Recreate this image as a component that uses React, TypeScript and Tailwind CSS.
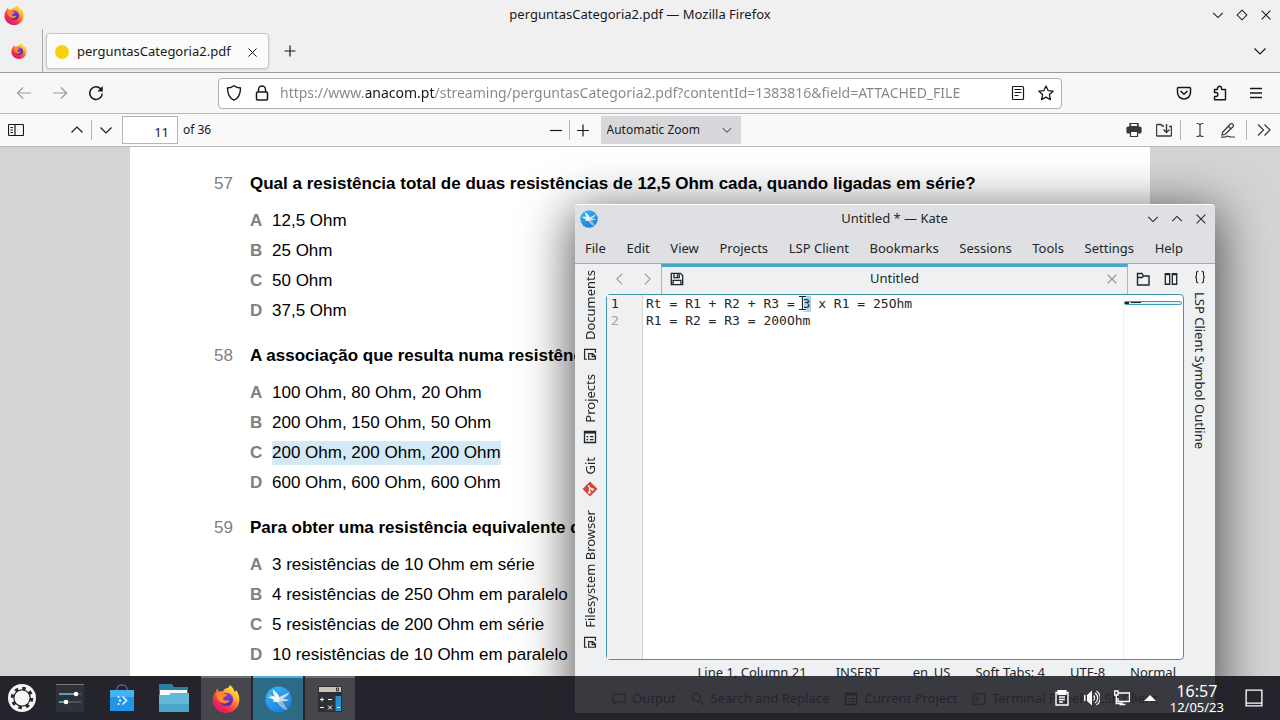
import { useId, type ReactNode } from "react";

type IconProps = { size?: number; className?: string; children: ReactNode };

function Icon({ size = 16, className = "", children }: IconProps) {
  return (
    <svg
      width={size}
      height={size}
      viewBox="0 0 16 16"
      fill="none"
      stroke="currentColor"
      strokeWidth="1.2"
      className={"shrink-0 " + className}
      aria-hidden="true"
    >
      {children}
    </svg>
  );
}

function IconButton({ label, className = "", children }: { label: string; className?: string; children: ReactNode }) {
  return (
    <button type="button" aria-label={label} className={"flex shrink-0 items-center justify-center " + className}>
      {children}
    </button>
  );
}

const ChevronDown = ({ size = 16 }: { size?: number }) => (
  <Icon size={size}><path d="M2.5 5.5 8 11l5.500-5.500" /></Icon>
);
const ChevronUp = ({ size = 16 }: { size?: number }) => (
  <Icon size={size}><path d="M2.500 10.500 8 5l5.500 5.500" /></Icon>
);
const Close = ({ size = 16 }: { size?: number }) => (
  <Icon size={size}><path d="m3 3 10 10M13 3 3 13" /></Icon>
);

function FirefoxLogo({ size }: { size: number }) {
  const id = useId();
  return (
    <svg width={size} height={size} viewBox="0 0 32 32" className="shrink-0" aria-hidden="true">
      <defs>
        <linearGradient id={id + "a"} x1="0.85" y1="0.05" x2="0.2" y2="0.95">
          <stop offset="0" stopColor="#fff04a" />
          <stop offset="0.3" stopColor="#ffb32c" />
          <stop offset="0.55" stopColor="#ff5b36" />
          <stop offset="0.8" stopColor="#ef2458" />
          <stop offset="1" stopColor="#d51a78" />
        </linearGradient>
        <linearGradient id={id + "b"} x1="0.3" y1="0" x2="0.6" y2="1">
          <stop offset="0" stopColor="#9a3df0" />
          <stop offset="1" stopColor="#4b2bb0" />
        </linearGradient>
      </defs>
      <path
        d="M4.500 7.500c.2-1.600.8-2.800 1.400-3.500.3 1.400 1.100 2.500 2.300 3.400 1.300-.5 3-.5 4.300-.1 1-2.200 3.200-3.500 5-3.800C19 3.200 20 2 20 0c3.400 1.800 5 4.500 5.600 7.400.9.2 1.700-.3 2-1.400 2.400 3 3.900 7 3.700 11C31 25.500 24.300 32 16 32S.8 25.500.8 17.500c0-4 1.200-7.500 3.700-10z"
        fill={`url(#${id}a)`}
      />
      <circle cx="16.500" cy="16.500" r="7.600" fill={`url(#${id}b)`} />
      <path d="M5 10c3-2.500 7-1.500 8.500.3 1 .2 2.600.2 3.700.4-.2 1.800-2 2.600-3.800 3.300-1.300.8-.8 3.400 1.800 3.800 2 .3 3-.6 4.500-.2-1 3-4.600 4.300-7.600 3C8 19 5 15 5 10z" fill="#ff8a2a" />
    </svg>
  );
}

function KateLogo({ size }: { size: number }) {
  const id = useId();
  return (
    <svg width={size} height={size} viewBox="0 0 32 32" className="shrink-0" aria-hidden="true">
      <defs>
        <linearGradient id={id} x1="0" y1="0" x2="0.6" y2="1">
          <stop offset="0" stopColor="#3db8f5" />
          <stop offset="1" stopColor="#1b7fe0" />
        </linearGradient>
      </defs>
      <circle cx="16" cy="16" r="15.500" fill={`url(#${id})`} />
      <path d="M9 4c3 2 6 5 8 9L29 7.500c-2 4-5 6-8 7.500l8 1.500c-3 1.500-6 2-9 1.500L26.500 28c-5-1-9-4-11-8L10 17c1-2 1-4 .5-6z" fill="#cfdde5" />
      <path d="M3 10.500 13 13l5 3-4 3-5-.5 2-2-8-3.500 5-.5z" fill="#f7fbfd" />
      <path d="M9 4c3 2 6 5 8 9l-2 2c-3-3-5-6-6-11z" fill="#fff" />
      <path d="m16 19 4-1 6.500 10c-5-1-9-4-10.500-9z" fill="#9fb4c0" />
    </svg>
  );
}

const DocumentIcon = () => (
  <Icon size={14}><path d="M4.500 14H1.800V2.700h12.400V6.500M6.500 14V7.500h4.500l3.200 3V14zM10.500 8v3h3.500" strokeWidth="1.400" /></Icon>
);
const ProjectIcon = () => (
  <Icon size={14}><path d="M1.700 1.700h12.600v12.600H1.700zM1.700 3.300h12.600M4 7.500h2m2 0h4M4 11h2m2 0h4" strokeWidth="1.500" /></Icon>
);
const GitIcon = () => (
  <Icon size={16}>
    <path d="m8 .5 7.500 7.500L8 15.500.5 8z" fill="#da4437" stroke="none" />
    <path d="M6 4.500 10.500 9M7.500 6v6" stroke="#fff" />
    <circle cx="7.500" cy="11.500" r="1.300" fill="#fff" stroke="none" />
    <circle cx="10.500" cy="8.500" r="1.300" fill="#fff" stroke="none" />
  </Icon>
);

const questions = [
  {
    number: 57,
    title: "Qual a resistência total de duas resistências de 12,5 Ohm cada, quando ligadas em série?",
    options: ["12,5 Ohm", "25 Ohm", "50 Ohm", "37,5 Ohm"],
    marked: -1,
  },
  {
    number: 58,
    title: "A associação que resulta numa resistência",
    options: ["100 Ohm, 80 Ohm, 20 Ohm", "200 Ohm, 150 Ohm, 50 Ohm", "200 Ohm, 200 Ohm, 200 Ohm", "600 Ohm, 600 Ohm, 600 Ohm"],
    marked: 2,
  },
  {
    number: 59,
    title: "Para obter uma resistência equivalente de",
    options: [
      "3 resistências de 10 Ohm em série",
      "4 resistências de 250 Ohm em paralelo",
      "5 resistências de 200 Ohm em série",
      "10 resistências de 10 Ohm em paralelo",
    ],
    marked: -1,
  },
];

function TitleBar() {
  return (
    <header className="grid h-[29px] shrink-0 grid-cols-[1fr_auto_1fr] items-center px-1 text-[13px]">
      <FirefoxLogo size={20} />
      <h1>perguntasCategoria2.pdf — Mozilla Firefox</h1>
      <div className="flex justify-end gap-2 pr-0.5">
        <IconButton label="Minimize" className="size-4"><ChevronDown size={14} /></IconButton>
        <IconButton label="Restore" className="size-4">
          <Icon size={14}><path d="m8 2.500 5.500 5.500L8 13.500 2.500 8z" /></Icon>
        </IconButton>
        <IconButton label="Close window" className="size-4"><Close size={14} /></IconButton>
      </div>
    </header>
  );
}

function TabStrip() {
  return (
    <div className="flex h-11 shrink-0 items-stretch border-b border-[#9c9c9d] pr-3">
      <div className="mr-[3px] flex w-[43px] items-center justify-center border-r border-[#a8a8a9] pr-1">
        <FirefoxLogo size={16} />
      </div>
      <div className="mt-1 mb-[3px] flex w-[223px] items-center rounded border border-[#c4c4c6] bg-[#fbfbfb] px-2 pt-0.5 shadow-sm">
        <span className="mr-2 size-[14px] rounded-full bg-[#fbd10f]" />
        <span className="flex-1 text-[13px]">perguntasCategoria2.pdf</span>
        <IconButton label="Close tab" className="size-4"><Close size={13} /></IconButton>
      </div>
      <IconButton label="New tab" className="ml-[11px] size-5 self-center">
        <Icon><path d="M8 2.500v11M2.500 8h11" /></Icon>
      </IconButton>
      <IconButton label="List all tabs" className="ml-auto size-4 self-center"><ChevronDown /></IconButton>
    </div>
  );
}

function NavBar() {
  return (
    <nav className="flex h-[41px] shrink-0 items-center border-b border-[#b9b9ba] bg-[#f7f7f8] px-4">
      <div className="flex flex-1 items-center gap-5">
        <IconButton label="Back" className="size-4 text-[#9b9b9c]">
          <Icon><path d="M15 8H1.500M7 2.500 1.500 8 7 13.500" /></Icon>
        </IconButton>
        <IconButton label="Forward" className="size-4 text-[#9b9b9c]">
          <Icon><path d="M1 8h13.500M9 2.500 14.500 8 9 13.500" /></Icon>
        </IconButton>
        <IconButton label="Reload" className="size-4">
          <Icon><path d="M13.200 4.500A6.300 6.300 0 1 0 14.300 8.500" strokeWidth="1.500" /><path d="M14.800 1v5.500H9.300z" fill="currentColor" stroke="none" /></Icon>
        </IconButton>
      </div>
      <div className="flex h-[31px] w-[844px] items-center rounded border border-[#aeaeb0] bg-white px-[7px]">
        <Icon><path d="M8 .8C6.300 2.200 4 3 1.500 3c0 6 1.500 10 6.500 12.200C13 13 14.500 9 14.500 3 12 3 9.700 2.200 8 .8z" strokeWidth="1.400" /></Icon>
        <Icon className="ml-3"><path d="M4.500 7V4.500a3.500 3.500 0 0 1 7 0V7M3.500 7h9a1 1 0 0 1 1 1v6a1 1 0 0 1-1 1h-9a1 1 0 0 1-1-1V8a1 1 0 0 1 1-1z" strokeWidth="1.500" /></Icon>
        <input
          aria-label="Address"
          readOnly
          value="https://www.anacom.pt/streaming/perguntasCategoria2.pdf?contentId=1383816&field=ATTACHED_FILE"
          className="mx-2.5 min-w-0 flex-1 bg-[linear-gradient(90deg,#86868a_86px,#18181b_86px,#18181b_155px,#86868a_155px)] bg-clip-text text-sm text-transparent outline-none"
        />
        <Icon><path d="M3.500 1.500h9a1 1 0 0 1 1 1v11a1 1 0 0 1-1 1h-9a1 1 0 0 1-1-1v-11a1 1 0 0 1 1-1zM4.500 4.500h7M4.500 7.500h7M4.500 10.500h4" /></Icon>
        <Icon className="ml-3"><path d="m8 1 2.100 4.600 5 .6-3.700 3.400 1 5L8 12.100l-4.400 2.500 1-5L.9 6.200l5-.6z" strokeWidth="1.300" strokeLinejoin="round" /></Icon>
      </div>
      <div className="flex flex-1 items-center justify-end gap-5">
        <Icon><path d="M2.500 2.500h11a1 1 0 0 1 1 1V7.500a6.500 6.500 0 0 1-13 0v-4a1 1 0 0 1 1-1zM4.500 6 8 9.300 11.500 6" strokeWidth="1.500" /></Icon>
        <Icon><path d="M5.500 4.500V3.300a2 2 0 0 1 4 0v1.200h4v10.300H2.500v-3.300h1.400a2 2 0 0 0 0-4H2.500v-3z" strokeWidth="1.400" strokeLinejoin="round" /></Icon>
        <IconButton label="Open menu" className="size-4"><Icon><path d="M2 3.500h12M2 8h12M2 12.500h12" strokeWidth="1.400" /></Icon></IconButton>
      </div>
    </nav>
  );
}

function PdfToolbar() {
  return (
    <div className="grid h-[33px] shrink-0 grid-cols-[1fr_auto_1fr] items-center border-b border-[#b8b8b9] bg-[#f9f9fa] px-2">
      <div className="flex items-center">
        <IconButton label="Toggle sidebar" className="size-4">
          <Icon><path d="M1.500 2.500h13a1 1 0 0 1 1 1v9a1 1 0 0 1-1 1h-13a1 1 0 0 1-1-1v-9a1 1 0 0 1 1-1zM7 2.500v11M2.500 5.500h2.500M2.500 8h2.500M2.500 10.500h2.500" /></Icon>
        </IconButton>
        <IconButton label="Previous page" className="ml-[45px] size-4"><ChevronUp /></IconButton>
        <span className="mx-1.5 h-5 w-px bg-[#b5b5b6]" />
        <IconButton label="Next page" className="size-4"><ChevronDown /></IconButton>
        <input
          id="page"
          readOnly
          value="11"
          className="ml-2 h-7 w-14 border border-[#b5b5b6] bg-white pt-1 pr-2 text-right text-[13px] outline-none"
        />
        <label htmlFor="page" className="ml-[5px] text-xs">of 36</label>
      </div>
      <div className="flex items-center pl-2">
        <IconButton label="Zoom out" className="size-4"><Icon><path d="M2 8.500h12" /></Icon></IconButton>
        <span className="mx-[5px] h-5 w-px bg-[#b5b5b6]" />
        <IconButton label="Zoom in" className="size-4"><Icon><path d="M2 8.500h12M8 2.500v12" /></Icon></IconButton>
        <div className="relative ml-2.5">
          <select aria-label="Zoom" className="h-7 w-[140px] appearance-none bg-[#d8d8dc] pl-1.5 text-xs">
            <option>Automatic Zoom</option>
          </select>
          <span className="pointer-events-none absolute top-2 right-2"><ChevronDown size={12} /></span>
        </div>
      </div>
      <div className="flex items-center justify-end text-[#38383d]">
        <IconButton label="Print" className="size-4">
          <Icon><path d="M4 5V1.500h8V5M4 11H2a1 1 0 0 1-1-1V6a1 1 0 0 1 1-1h12a1 1 0 0 1 1 1v4a1 1 0 0 1-1 1h-2z" fill="currentColor" /><path d="M4.500 4.500v-3h7v3zM4.500 9.500h7v5h-7z" fill="#fff" /></Icon>
        </IconButton>
        <IconButton label="Download" className="ml-3.5 size-4">
          <Icon><path d="M8 4H6.500L5 2.500H1.500a1 1 0 0 0-1 1v9.500a1 1 0 0 0 1 1h13a1 1 0 0 0 1-1V4.500H13M10.500 2v8M7.500 7.500l3 3 3-3" strokeWidth="1.400" /></Icon>
        </IconButton>
        <span className="mx-2 h-5 w-px bg-[#b5b5b6]" />
        <IconButton label="Add text" className="ml-[3px] size-4">
          <Icon><path d="M4.500 1.500c2 0 3.500.3 3.500 1.500v10c0 1.200-1.500 1.500-3.500 1.500M11.500 1.500C9.500 1.500 8 1.800 8 3v10c0 1.200 1.500 1.500 3.500 1.500" /></Icon>
        </IconButton>
        <IconButton label="Draw" className="ml-3 size-4">
          <Icon><path d="m2.500 10.500 7.800-8.500a1.500 1.500 0 0 1 2.200 0l.5.500a1.500 1.500 0 0 1 0 2.200L5 12.500 2 13zM8.500 4.500 11 7M1 15c3 .5 5-.2 6-.8 1.500-.6 2 .8 3.500.8H15" /></Icon>
        </IconButton>
        <span className="mr-[9px] ml-2.5 h-5 w-px bg-[#b5b5b6]" />
        <IconButton label="Tools" className="size-4">
          <Icon><path d="m2 2.500 5.500 5.500L2 13.500M8.500 2.500 14 8l-5.500 5.500" /></Icon>
        </IconButton>
      </div>
    </div>
  );
}

function PdfPage() {
  return (
    <main className="flex min-h-0 flex-1 justify-center overflow-hidden bg-[#d4d4d7]">
      <article className="flex w-[1020px] flex-col gap-[15px] self-start bg-white pt-[22px] pb-10 pl-[84px] font-['Liberation_Sans',sans-serif] text-[17px] leading-[30px] text-black">
        {questions.map((q) => (
          <section key={q.number}>
            <h2 className="flex">
              <span className="w-9 text-[#808080]">{q.number}</span>
              <span className="font-bold whitespace-nowrap">{q.title}</span>
            </h2>
            <ol className="mt-[7px] pl-9">
              {q.options.map((text, i) => (
                <li key={text} className="flex items-center">
                  <span className="w-[22px] font-bold text-[#808080]">{"ABCD"[i]}</span>
                  <span className={i === q.marked ? "bg-[#d3e9f5] leading-6" : ""}>{text}</span>
                </li>
              ))}
            </ol>
          </section>
        ))}
      </article>
    </main>
  );
}

const menus = ["File", "Edit", "View", "Projects", "LSP Client", "Bookmarks", "Sessions", "Tools", "Settings", "Help"];

const sideTabs = [
  { label: "Documents", icon: <DocumentIcon /> },
  { label: "Projects", icon: <ProjectIcon /> },
  { label: "Git", icon: <GitIcon /> },
  { label: "Filesystem Browser", icon: <DocumentIcon /> },
];

const code = "Rt = R1 + R2 + R3 = 3 x R1 = 25Ohm\nR1 = R2 = R3 = 200Ohm";

function KateWindow() {
  return (
    <section
      aria-label="Kate"
      className="absolute top-[204px] left-[575px] flex h-[509px] w-[640px] flex-col overflow-hidden rounded-t border-t border-white bg-[#eff0f1] text-[13px] text-[#232629] shadow-[0_10px_50px_4px_rgba(0,0,0,0.65)]"
    >
      <header className="bg-[#dfe0e4]">
        <div className="grid h-7 grid-cols-[1fr_auto_1fr] items-center pr-1.5 pl-[5px]">
          <KateLogo size={18} />
          <h2>Untitled * — Kate</h2>
          <div className="flex justify-end gap-2">
            <IconButton label="Minimize" className="size-4"><ChevronDown size={14} /></IconButton>
            <IconButton label="Maximize" className="size-4"><ChevronUp size={14} /></IconButton>
            <IconButton label="Close Kate" className="size-4"><Close size={14} /></IconButton>
          </div>
        </div>
        <nav className="flex h-[31px] items-center justify-between border-b border-[#a5a9ad] pt-0.5 pr-8 pl-2.5">
          {menus.map((m) => (
            <button type="button" key={m}>{m}</button>
          ))}
        </nav>
      </header>
      <div className="flex min-h-0 flex-1">
        <aside className="flex w-[31px] shrink-0 flex-col items-center gap-[13px] pt-1.5 pr-0.5">
          {sideTabs.map((t) => (
            <button type="button" key={t.label} className="flex flex-col items-center gap-[7px]">
              <span className="rotate-180 leading-5 [writing-mode:vertical-rl]">{t.label}</span>
              {t.icon}
            </button>
          ))}
        </aside>
        <div className="flex min-w-0 flex-1 flex-col">
          <div className="flex h-[30px] shrink-0 items-stretch">
            <IconButton label="Previous document" className="w-[27px] text-[#85888a]"><Icon size={14}><path d="M10.500 2 4.500 8l6 6" /></Icon></IconButton>
            <IconButton label="Next document" className="w-7 text-[#85888a]"><Icon size={14}><path d="m5.500 2 6 6-6 6" /></Icon></IconButton>
            <div className="flex flex-1 items-center border-x border-t-[3px] border-x-[#9cbccb] border-t-[#46a7cb] px-2 pb-1">
              <Icon size={14}><path d="M1.500 1.500h10.500l2.500 2.500v10.500h-13zM4.500 1.500v5h6v-5M8.500 2.500v3M3.500 14v-4.500h9V14" strokeWidth="1.500" /></Icon>
              <span className="flex-1 text-center">Untitled</span>
              <IconButton label="Close document" className="w-3.5 text-[#85888a]"><Close size={14} /></IconButton>
            </div>
            <IconButton label="Open" className="w-[29px]"><Icon><path d="M2.500 14V2.500H7L8.500 5h5.500V14zM2.500 6.500H7L8.500 5" strokeWidth="1.400" /></Icon></IconButton>
            <IconButton label="Split view" className="w-[27px]"><Icon size={14}><path d="M1.500 2h5v12h-5zM9.500 2h5v12h-5zM1 3h6M9 3h6" strokeWidth="1.500" /></Icon></IconButton>
          </div>
          <div className="relative flex flex-1 rounded-sm border border-[#3f95a8] bg-white font-['DejaVu_Sans_Mono',monospace] leading-[17px]">
            <div className="w-9 border-r border-[#d5d6d7] bg-[#f1f1f2] pl-1 text-[#a3a5a7]">
              <div className="text-[#232629]">1</div>
              <div>2</div>
            </div>
            <span className="absolute top-px left-[196px] h-4 w-2 bg-[#abd3ea]" />
            <textarea
              aria-label="Document text"
              readOnly
              value={code}
              className="relative min-w-0 flex-1 resize-none overflow-hidden bg-transparent pl-[3px] whitespace-pre outline-none"
            />
            <div className="w-[60px] border-l border-[#f1f1f1] pt-1.5">
              <div className="flex h-1 w-[58px] rounded-sm border border-[#3c9db5] bg-[#d9f2f8]">
                <span className="h-0.5 w-1 bg-[#232629]" />
                <span className="ml-0.5 h-px w-2.5 bg-[#232629]" />
              </div>
            </div>
            <svg className="absolute top-0 left-[190px]" width="11" height="17" viewBox="0 0 11 17" fill="none" aria-hidden="true">
              <path d="M2 1.500h3l.5.5.5-.5h3M5.500 2v12M2 14.500h3l.5-.5.5.5h3" stroke="#fff" strokeWidth="3" />
              <path d="M2 1.500h3l.5.5.5-.5h3M5.500 2v12M2 14.500h3l.5-.5.5.5h3" stroke="#222" strokeWidth="1.200" />
            </svg>
          </div>
          <div className="flex h-6 items-center justify-end gap-[25px] pt-0.5 pr-2">
            <span className="mr-1">Line 1, Column 21</span>
            <span className="mr-2">INSERT</span>
            <span>en_US</span>
            <span>Soft Tabs: 4</span>
            <span>UTF-8</span>
            <span>Normal</span>
          </div>
          <div className="flex h-[29px] items-center gap-[15px] pr-2 pl-1.5 whitespace-nowrap">
            <button type="button" className="flex items-center gap-1.5">
              <Icon size={14}><path d="M1 2.500h14v9H6L3.500 14v-2.500H1z" /></Icon>Output
            </button>
            <button type="button" className="flex items-center gap-1.5">
              <Icon size={14}><circle cx="6" cy="6" r="4.500" /><path d="m9.500 9.500 5.500 5.500" /></Icon>Search and Replace
            </button>
            <button type="button" className="flex items-center gap-1.5"><ProjectIcon />Current Project</button>
            <button type="button" className="flex items-center gap-1.5">
              <Icon size={14}><path d="M1.500 2h13v12h-13zM4 5l3 3-3 3" /></Icon>Terminal Panel
            </button>
            <button type="button">LSP Client</button>
          </div>
        </div>
        <aside className="flex w-[31px] shrink-0 flex-col items-center pt-1.5">
          <button type="button" className="flex flex-col items-center gap-2">
            <Icon size={14}><path d="M6 1.500C3.500 1.500 4 3 4 5.500 4 7 3.500 8 2.500 8c1 0 1.500 1 1.500 2.500 0 2.500-.5 4 2 4M10 1.500c2.500 0 2 1.500 2 4C12 7 12.500 8 13.500 8c-1 0-1.500 1-1.500 2.500 0 2.500.5 4-2 4" strokeWidth="1.300" /></Icon>
            <span className="leading-5 [writing-mode:vertical-rl]">LSP Client Symbol Outline</span>
          </button>
        </aside>
      </div>
    </section>
  );
}

function Taskbar() {
  return (
    <footer className="relative flex h-11 shrink-0 items-stretch bg-[#25252c]/90 text-white">
      <IconButton label="Application launcher" className="w-11">
        <svg width="28" height="28" viewBox="0 0 28 28" aria-hidden="true">
          <circle cx="14" cy="14" r="14" fill="#f5f5f6" />
          <circle cx="14" cy="14" r="8" fill="none" stroke="#25252c" strokeWidth="1.500" />
          <circle cx="14" cy="14" r="9.500" fill="none" stroke="#25252c" strokeWidth="3.500" strokeDasharray="3.400 4.060" />
          <circle cx="14" cy="14" r="7.500" fill="#f5f5f6" />
        </svg>
      </IconButton>
      <IconButton label="System settings" className="w-[52px]">
        <svg width="28" height="28" viewBox="0 0 28 28" aria-hidden="true">
          <path d="M0 0h28v28H0z" fill="#2f3338" />
          <path d="M0 .5h28" stroke="#777b80" />
          <path d="M3 10h17M3 18h7" stroke="#69c4ee" strokeWidth="1.500" />
          <path d="M20 10h5M10 18h15" stroke="#586069" strokeWidth="1.500" />
          <circle cx="20" cy="10" r="2.300" fill="#fff" /><circle cx="10" cy="18" r="2.300" fill="#fff" />
        </svg>
      </IconButton>
      <IconButton label="Discover" className="w-[52px]">
        <svg width="26" height="28" viewBox="0 0 26 28" aria-hidden="true">
          <path d="M8 8V4.500A4 4 0 0 1 12 1h2a4 4 0 0 1 4 3.500V8" fill="none" stroke="#6f8290" />
          <path d="M1 6h24v21H1z" fill="#2196e8" /><path d="M1 6h24v7H1z" fill="#42b2f3" />
          <path d="m13.500 12.500 4 4-4 4" fill="none" stroke="#e8f6ff" strokeWidth="1.600" />
          <circle cx="9.500" cy="13" r="1" fill="#fff" /><circle cx="9.500" cy="20" r="1" fill="#fff" /><circle cx="11" cy="16.500" r="1.300" fill="#fff" />
        </svg>
      </IconButton>
      <IconButton label="Files" className="w-[52px]">
        <svg width="30" height="28" viewBox="0 0 30 28" aria-hidden="true">
          <path d="M0 0h13l2 3h14v8H0z" fill="#2b7fa5" />
          <path d="M1 6h27v8H1z" fill="#f7f8f8" />
          <path d="M0 11h10l2-2h18v19H0z" fill="#61b7d5" />
          <path d="M0 20h30v8H0z" fill="#4ba5c8" />
        </svg>
      </IconButton>
      <div className="ml-px flex gap-0.5">
        <IconButton label="Firefox" className="w-[50px] border-t-2 border-[#6c6c72] bg-[#46464c]"><FirefoxLogo size={28} /></IconButton>
        <IconButton label="Kate editor" className="w-[50px] border-t-2 border-[#4bb0dc] bg-[#2d6a86]"><KateLogo size={27} /></IconButton>
        <IconButton label="Calculator" className="w-[50px] border-t-2 border-[#6c6c72] bg-[#46464c]">
          <svg width="24" height="26" viewBox="0 0 24 26" aria-hidden="true">
            <path d="M0 0h24v26H0z" fill="#2e3033" />
            <path d="M1 1h22v5H1z" fill="#c9c4b4" /><path d="M18.500 2h2v3h-2z" stroke="#333" fill="none" />
            <path d="M17.500 10H23v15h-5.500z" fill="#2a8ed0" />
            <path d="M2 13.500h4M4 11.500v4M10 13.500h4M2 21.500h4M10 19.500l4 4M14 19.500l-4 4M19 21.500h3" stroke="#fff" />
          </svg>
        </IconButton>
      </div>
      <div className="ml-auto flex items-center gap-3.5">
        <IconButton label="Clipboard" className="size-4"><Icon><path d="M2 2.500h12v12.500H2zM5 7h6M5 9.500h6M5 12h4" strokeWidth="1.400" /><path d="M4 .5h8v4H4z" fill="currentColor" /></Icon></IconButton>
        <IconButton label="Volume" className="size-4"><Icon><path d="M0 5h1.500v6H0zM3 5l5-4.500v15L3 11z" fill="currentColor" stroke="none" /><path d="M9.500 5.500a3.500 3.500 0 0 1 0 5M11 3a6 6 0 0 1 0 10M12.500 1a8.500 8.500 0 0 1 0 14" /></Icon></IconButton>
        <IconButton label="Network" className="size-4"><Icon><path d="M4 3V1H.600v4H4V3h11.500v8.500H4V8M2.300 5v8.500H7M8 12v2.500M5.500 14.500h6" strokeWidth="1.400" /></Icon></IconButton>
        <IconButton label="Show hidden icons" className="size-3"><Icon size={12}><path d="M0 12 8 4l8 8z" fill="currentColor" stroke="none" /></Icon></IconButton>
      </div>
      <div className="ml-3.5 flex flex-col items-center justify-center pt-0.5">
        <time className="text-base leading-4">16:57</time>
        <time className="text-[13px] leading-4">12/05/23</time>
      </div>
      <IconButton label="Show desktop" className="mr-4 ml-5 w-5"><Icon size={18}><path d="M1 1h14v14H1zM1 12.500h14" /></Icon></IconButton>
    </footer>
  );
}

export default function App() {
  return (
    <div className="relative flex h-screen flex-col overflow-hidden bg-[#26242b] font-['Noto_Sans',sans-serif] text-[#18181b]">
      <div className="flex min-h-0 flex-1 flex-col bg-[#f0f0f1]">
        <TitleBar />
        <TabStrip />
        <NavBar />
        <PdfToolbar />
        <PdfPage />
      </div>
      <KateWindow />
      <Taskbar />
    </div>
  );
}
